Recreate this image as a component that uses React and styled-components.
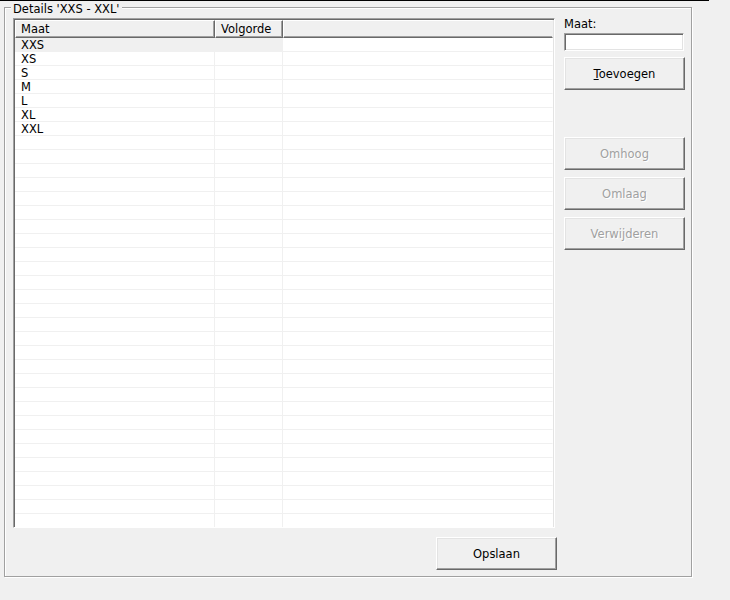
import styled, { createGlobalStyle } from "styled-components";

const GlobalStyle = createGlobalStyle`
  html, body {
    margin: 0;
    padding: 0;
    background: #f0f0f0;
  }
  body {
    font-family: "DejaVu Sans", Tahoma, sans-serif;
    font-size: 11.5px;
    color: #000;
  }
`;

const sizes = ["XXS", "XS", "S", "M", "L", "XL", "XXL"];
const ROW_COUNT = 35;

export default function App() {
  const rows = Array.from({ length: ROW_COUNT }, (_, i) => sizes[i] || "");
  return (
    <>
      <GlobalStyle />
      <Page>
        <TopLine />
        <GroupBox>
          <Legend>Details 'XXS - XXL'</Legend>
          <LeftColumn>
            <ListView>
              <HeaderRow>
                <HeaderCell>Maat</HeaderCell>
                <HeaderCell>Volgorde</HeaderCell>
                <HeaderCell $filler />
              </HeaderRow>
              <Rows>
                {rows.map((name, i) => (
                  <Row key={i}>
                    <Cell $selected={i === 0}>{name}</Cell>
                    <Cell $selected={i === 0} />
                    <Cell $last />
                  </Row>
                ))}
              </Rows>
            </ListView>
            <Button $save>Opslaan</Button>
          </LeftColumn>
          <Side>
            <Label>Maat:</Label>
            <TextInput />
            <Button>
              <u>T</u>oevoegen
            </Button>
            <DisabledGroup>
              <Button disabled>Omhoog</Button>
              <Button disabled>Omlaag</Button>
              <Button disabled>Verwijderen</Button>
            </DisabledGroup>
          </Side>
        </GroupBox>
      </Page>
    </>
  );
}

const Page = styled.div`
  width: 730px;
  height: 600px;
  overflow: hidden;
`;

const TopLine = styled.div`
  width: 709px;
  height: 1px;
  background: #000;
`;

const GroupBox = styled.div`
  position: relative;
  margin: 6px 0 0 4px;
  box-sizing: border-box;
  width: 688px;
  height: 570px;
  border: 1px solid #a0a0a0;
  box-shadow: inset 1px 1px 0 #fff, 1px 1px 0 #fff;
  padding: 10px 0 0 8px;
  display: grid;
  grid-template-columns: 542px 121px;
  column-gap: 9px;
  align-items: start;
`;

const Legend = styled.div`
  position: absolute;
  top: -5px;
  left: 6px;
  padding: 0 2px;
  line-height: 13px;
  background: #f0f0f0;
  white-space: nowrap;
`;

const LeftColumn = styled.div`
  display: flex;
  flex-direction: column;
  align-items: flex-end;
  gap: 9px;
`;

const ListView = styled.div`
  width: 542px;
  height: 510px;
  box-sizing: border-box;
  border: 1px solid;
  border-color: #a0a0a0 #fff #fff #a0a0a0;
  box-shadow: inset 1px 1px 0 #696969, inset -1px -1px 0 #e3e3e3;
  padding: 1px;
  background: #fff;
  overflow: hidden;
  display: flex;
  flex-direction: column;
`;

const HeaderRow = styled.div`
  display: grid;
  grid-template-columns: 200px 68px 1fr;
  height: 18px;
  flex-shrink: 0;
`;

const HeaderCell = styled.div`
  box-sizing: border-box;
  background: #f0f0f0;
  border-top: 1px solid #fff;
  border-left: 1px solid #fff;
  border-bottom: 1px solid #696969;
  border-right: 1px solid ${(p) => (p.$filler ? "transparent" : "#696969")};
  box-shadow: ${(p) =>
    p.$filler ? "inset 0 -1px 0 #a0a0a0" : "inset -1px -1px 0 #a0a0a0"};
  padding: 0 0 0 5px;
  line-height: 16px;
  white-space: nowrap;
`;

const Rows = styled.div`
  display: flex;
  flex-direction: column;
`;

const Row = styled.div`
  display: grid;
  grid-template-columns: 200px 68px 1fr;
  grid-template-rows: 14px;
  height: 14px;
  flex-shrink: 0;
`;

const Cell = styled.div`
  box-sizing: border-box;
  height: 14px;
  border-bottom: 1px solid #f0f0f0;
  border-right: 1px solid ${(p) => (p.$last ? "transparent" : "#f0f0f0")};
  background: ${(p) => (p.$selected ? "#f0f0f0" : "#fff")};
  padding: 1px 0 0 6px;
  line-height: 12px;
  overflow: visible;
`;

const Side = styled.div`
  display: flex;
  flex-direction: column;
  width: 121px;
`;

const Label = styled.div`
  height: 15px;
  line-height: 13px;
`;

const TextInput = styled.input`
  box-sizing: border-box;
  width: 120px;
  height: 18px;
  margin: 0 0 6px 0;
  border: 1px solid;
  border-color: #a0a0a0 #fff #fff #a0a0a0;
  box-shadow: inset 1px 1px 0 #696969, inset -1px -1px 0 #e3e3e3;
  background: #fff;
  outline: none;
  padding: 0 2px;
  font: inherit;
`;

const Button = styled.button`
  box-sizing: border-box;
  width: 121px;
  height: 33px;
  margin: ${(p) => (p.$save ? "0 -2px 0 0" : "0")};
  border: 1px solid;
  border-color: #fff #696969 #696969 #fff;
  box-shadow: inset -1px -1px 0 #a0a0a0, inset 1px 1px 0 #e3e3e3;
  background: #f0f0f0;
  font-family: "DejaVu Sans", Tahoma, sans-serif;
  font-size: 11.5px;
  color: #000;
  padding: 0;
  &:disabled {
    color: #a0a0a0;
    text-shadow: 1px 1px 0 #fff;
  }
  u {
    text-decoration: underline;
  }
`;

const DisabledGroup = styled.div`
  display: flex;
  flex-direction: column;
  gap: 7px;
  margin-top: 47px;
`;
